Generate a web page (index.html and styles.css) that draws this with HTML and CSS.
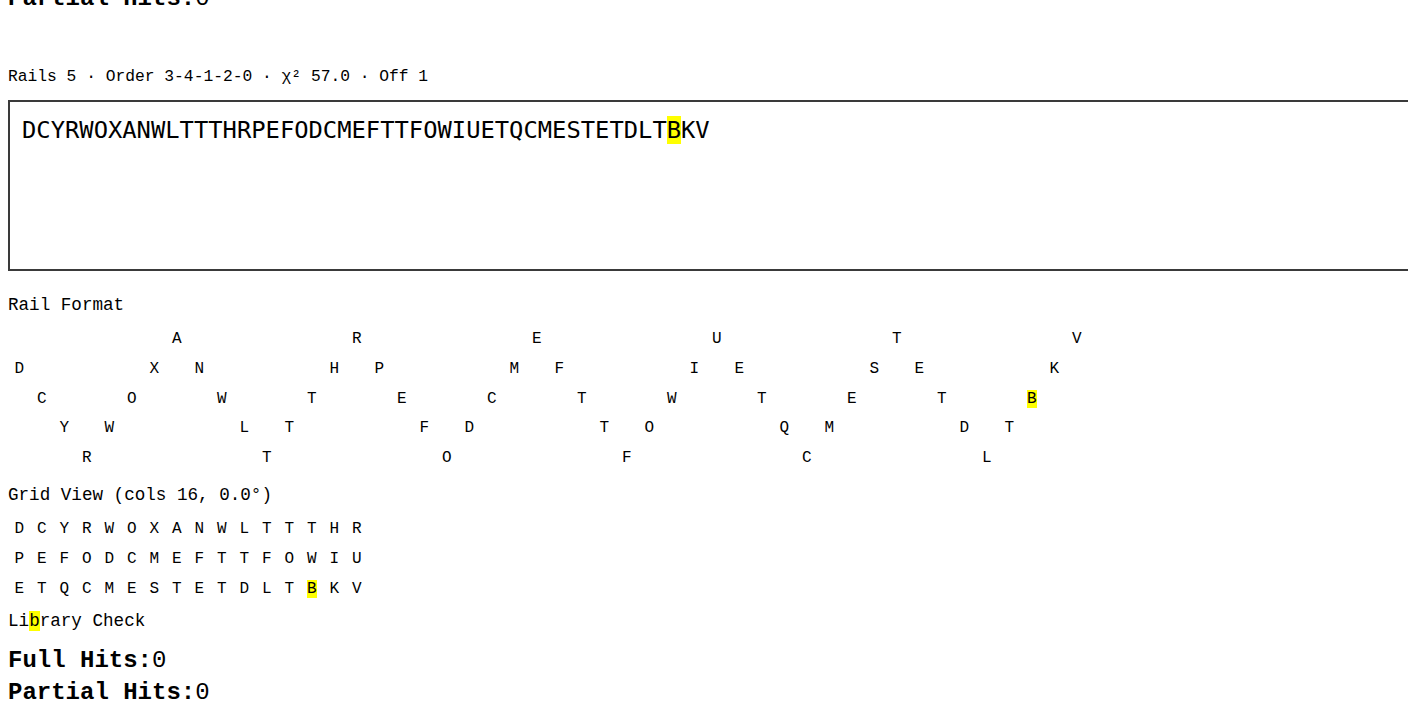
FILE: index.html
```html
<!DOCTYPE html>
<html lang="en">
<head>
    <meta charset="UTF-8">
    <meta name="viewport" content="width=device-width, initial-scale=1.0">
    <title>Rail Fence Solver</title>
    <link rel="stylesheet" href="styles.css">
</head>
<body>

    <div class="hits prev"><strong>Partial Hits:</strong>0</div>

    <div class="result">
        <div class="meta">Rails 5 · Order 3-4-1-2-0 · χ² 57.0 · Off 1</div>

        <div class="plain">DCYRWOXANWLTTTHRPEFODCMEFTTFOWIUETQCMESTETDLT<mark>B</mark>KV</div>

        <div class="label first">Rail Format</div>
        <div class="rail">
            <span class="r1">D</span><span class="r2">C</span><span class="r3">Y</span><span class="r4">R</span>
            <span class="r3">W</span><span class="r2">O</span><span class="r1">X</span><span class="r0">A</span>
            <span class="r1">N</span><span class="r2">W</span><span class="r3">L</span><span class="r4">T</span>
            <span class="r3">T</span><span class="r2">T</span><span class="r1">H</span><span class="r0">R</span>
            <span class="r1">P</span><span class="r2">E</span><span class="r3">F</span><span class="r4">O</span>
            <span class="r3">D</span><span class="r2">C</span><span class="r1">M</span><span class="r0">E</span>
            <span class="r1">F</span><span class="r2">T</span><span class="r3">T</span><span class="r4">F</span>
            <span class="r3">O</span><span class="r2">W</span><span class="r1">I</span><span class="r0">U</span>
            <span class="r1">E</span><span class="r2">T</span><span class="r3">Q</span><span class="r4">C</span>
            <span class="r3">M</span><span class="r2">E</span><span class="r1">S</span><span class="r0">T</span>
            <span class="r1">E</span><span class="r2">T</span><span class="r3">D</span><span class="r4">L</span>
            <span class="r3">T</span><span class="r2"><mark>B</mark></span><span class="r1">K</span><span class="r0">V</span>
        </div>

        <div class="label">Grid View (cols 16, 0.0°)</div>
        <div class="grid">
            <span>D</span><span>C</span><span>Y</span><span>R</span><span>W</span><span>O</span><span>X</span><span>A</span>
            <span>N</span><span>W</span><span>L</span><span>T</span><span>T</span><span>T</span><span>H</span><span>R</span>
            <span>P</span><span>E</span><span>F</span><span>O</span><span>D</span><span>C</span><span>M</span><span>E</span>
            <span>F</span><span>T</span><span>T</span><span>F</span><span>O</span><span>W</span><span>I</span><span>U</span>
            <span>E</span><span>T</span><span>Q</span><span>C</span><span>M</span><span>E</span><span>S</span><span>T</span>
            <span>E</span><span>T</span><span>D</span><span>L</span><span>T</span><span><mark>B</mark></span><span>K</span><span>V</span>
        </div>

        <div class="label lib">Li<mark>b</mark>rary Check</div>
        <div class="hits"><strong>Full Hits:</strong>0</div>
        <div class="hits"><strong>Partial Hits:</strong>0</div>
    </div>

</body>
</html>
```

FILE: styles.css
```css
* {
    box-sizing: border-box;
}
html {
    overflow-x: hidden;
}
body {
    margin: 0 8px;
    font-family: "Liberation Mono", monospace;
    font-size: 16px;
    color: #000;
    background-color: #fff;
}
mark {
    background-color: #ffff00;
    color: #000;
}
.hits {
    font-size: 24px;
    line-height: 32px;
}
.hits strong {
    font-weight: bold;
}
.prev {
    margin-top: -17px;
}
.result {
    padding-top: 52px;
}
.meta {
    font-size: 16.3px;
    line-height: 20px;
}
.plain {
    margin-top: 13px;
    width: 1500px;
    height: 171px;
    border: 2px solid #3a3a3a;
    padding: 10px 12px;
    font-family: "DejaVu Sans Mono", monospace;
    font-size: 23.8px;
    line-height: 36px;
}
.label {
    font-size: 17.6px;
    line-height: 20px;
    margin-top: 8px;
}
.label.first {
    margin-top: 24px;
}
.rail {
    display: flex;
    height: 148.75px;
    margin-top: 10px;
}
.rail span {
    flex: none;
    width: 22.5px;
    height: 29.75px;
    line-height: 29.75px;
    text-align: center;
}
.r1 { margin-top: 29.75px; }
.r2 { margin-top: 59.5px; }
.r3 { margin-top: 89.25px; }
.r4 { margin-top: 119px; }
.grid {
    display: grid;
    grid-template-columns: repeat(16, 22.5px);
    grid-auto-rows: 30px;
    align-items: center;
    margin-top: 9px;
}
.grid span {
    text-align: center;
}
.rail + .label {
    margin-top: 11px;
}
.lib {
    margin-top: 7px;
    margin-bottom: 14px;
}
```
